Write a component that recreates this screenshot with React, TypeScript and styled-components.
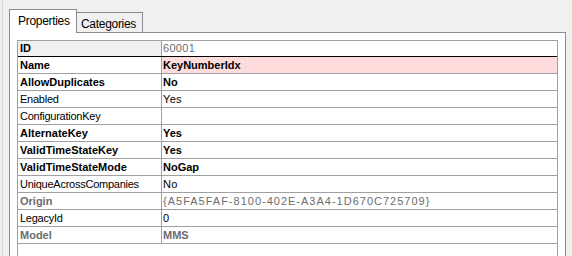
import styled, { createGlobalStyle } from "styled-components";

const GlobalStyle = createGlobalStyle`
  html, body {
    margin: 0;
    padding: 0;
    background: #f0f0f0;
  }
  body {
    font-family: "Liberation Sans", Arial, sans-serif;
  }
`;

const Window = styled.div`
  width: 572px;
  height: 256px;
  box-sizing: border-box;
  padding: 0 6px 0 2px;
  overflow: hidden;
  background: #f0f0f0;
`;

const Frame = styled.div`
  height: 100%;
  box-sizing: border-box;
  border-left: 1px solid #dadada;
  padding: 9px 0 0 6px;
  display: flex;
  flex-direction: column;
`;

const TabStrip = styled.div`
  display: flex;
  align-items: flex-end;
  height: 24px;
  margin-bottom: -1px;
  position: relative;
  z-index: 1;
`;

const Tab = styled.div<{ $active: boolean }>`
  box-sizing: border-box;
  height: ${(p) => (p.$active ? "24px" : "20px")};
  width: ${(p) => (p.$active ? "68px" : "66px")};
  margin-bottom: ${(p) => (p.$active ? "0" : "1px")};
  border: 1px solid #898c95;
  border-bottom: none;
  border-left: ${(p) => (p.$active ? "1px solid #898c95" : "none")};
  background: ${(p) => (p.$active ? "#ffffff" : "#f0f0f0")};
  font-size: 12px;
  letter-spacing: -0.3px;
  color: #000;
  padding: ${(p) => (p.$active ? "4px 0 0 8px" : "4px 0 0 4px")};
  white-space: nowrap;
`;

const Page = styled.div`
  flex: 1;
  border: 1px solid #898c95;
  border-bottom: none;
  background: #ffffff;
  padding: 7px 7px 0 7px;
`;

const Grid = styled.div`
  border: 1px solid #a0a0a0;
  border-bottom: none;
  background: #ffffff;
  height: 100%;
  box-sizing: border-box;
`;

const Row = styled.div<{ $focus?: boolean }>`
  display: grid;
  grid-template-columns: 144px 1fr;
  height: ${(p) => (p.$focus ? "16px" : "17px")};
  box-sizing: border-box;
  border-bottom: 1px solid ${(p) => (p.$focus ? "#000000" : "#a0a0a0")};
  font-size: 11px;
  line-height: ${(p) => (p.$focus ? "15px" : "16px")};
`;

const Label = styled.div<{ $bold: boolean; $dim: boolean; $sel: boolean }>`
  border-right: 1px solid #a0a0a0;
  padding-left: 2px;
  background: ${(p) => (p.$sel ? "#f0f0f0" : "#ffffff")};
  font-weight: ${(p) => (p.$bold ? 700 : 400)};
  letter-spacing: ${(p) => (p.$bold ? "0" : "-0.25px")};
  color: ${(p) => (p.$dim ? "#6d6d6d" : "#000000")};
  white-space: nowrap;
  overflow: hidden;
`;

const Value = styled.div<{ $bold: boolean; $dim: boolean; $bg: string; $wide: boolean }>`
  padding-left: 1px;
  background: ${(p) => p.$bg};
  font-weight: ${(p) => (p.$bold ? 700 : 400)};
  letter-spacing: ${(p) => (p.$wide ? "1px" : p.$bold ? "0" : "0.3px")};
  color: ${(p) => (p.$dim ? "#6d6d6d" : "#000000")};
  white-space: nowrap;
  overflow: hidden;
`;

interface Prop {
  name: string;
  value: string;
  bold?: boolean;
  dim?: boolean;
  valueDim?: boolean;
  valueBold?: boolean;
  bg?: string;
}

const props: Prop[] = [
  { name: "ID", value: "60001", bold: true, valueDim: true, valueBold: false },
  { name: "Name", value: "KeyNumberIdx", bold: true, bg: "#ffdcdc" },
  { name: "AllowDuplicates", value: "No", bold: true },
  { name: "Enabled", value: "Yes" },
  { name: "ConfigurationKey", value: "" },
  { name: "AlternateKey", value: "Yes", bold: true },
  { name: "ValidTimeStateKey", value: "Yes", bold: true },
  { name: "ValidTimeStateMode", value: "NoGap", bold: true },
  { name: "UniqueAcrossCompanies", value: "No" },
  { name: "Origin", value: "{A5FA5FAF-8100-402E-A3A4-1D670C725709}", bold: true, dim: true, valueBold: false },
  { name: "LegacyId", value: "0" },
  { name: "Model", value: "MMS", bold: true, dim: true },
];

export default function App() {
  return (
    <>
      <GlobalStyle />
      <Window>
        <Frame>
          <TabStrip>
            <Tab $active>Properties</Tab>
            <Tab $active={false}>Categories</Tab>
          </TabStrip>
          <Page>
            <Grid>
              {props.map((p, i) => (
                <Row key={p.name} $focus={i === 0}>
                  <Label $bold={!!p.bold} $dim={!!p.dim} $sel={i === 0}>
                    {p.name}
                  </Label>
                  <Value
                    $bold={p.valueBold ?? !!p.bold}
                    $dim={p.valueDim ?? !!p.dim}
                    $bg={p.bg ?? "#ffffff"}
                    $wide={p.value.startsWith("{")}
                  >
                    {p.value}
                  </Value>
                </Row>
              ))}
            </Grid>
          </Page>
        </Frame>
      </Window>
    </>
  );
}
